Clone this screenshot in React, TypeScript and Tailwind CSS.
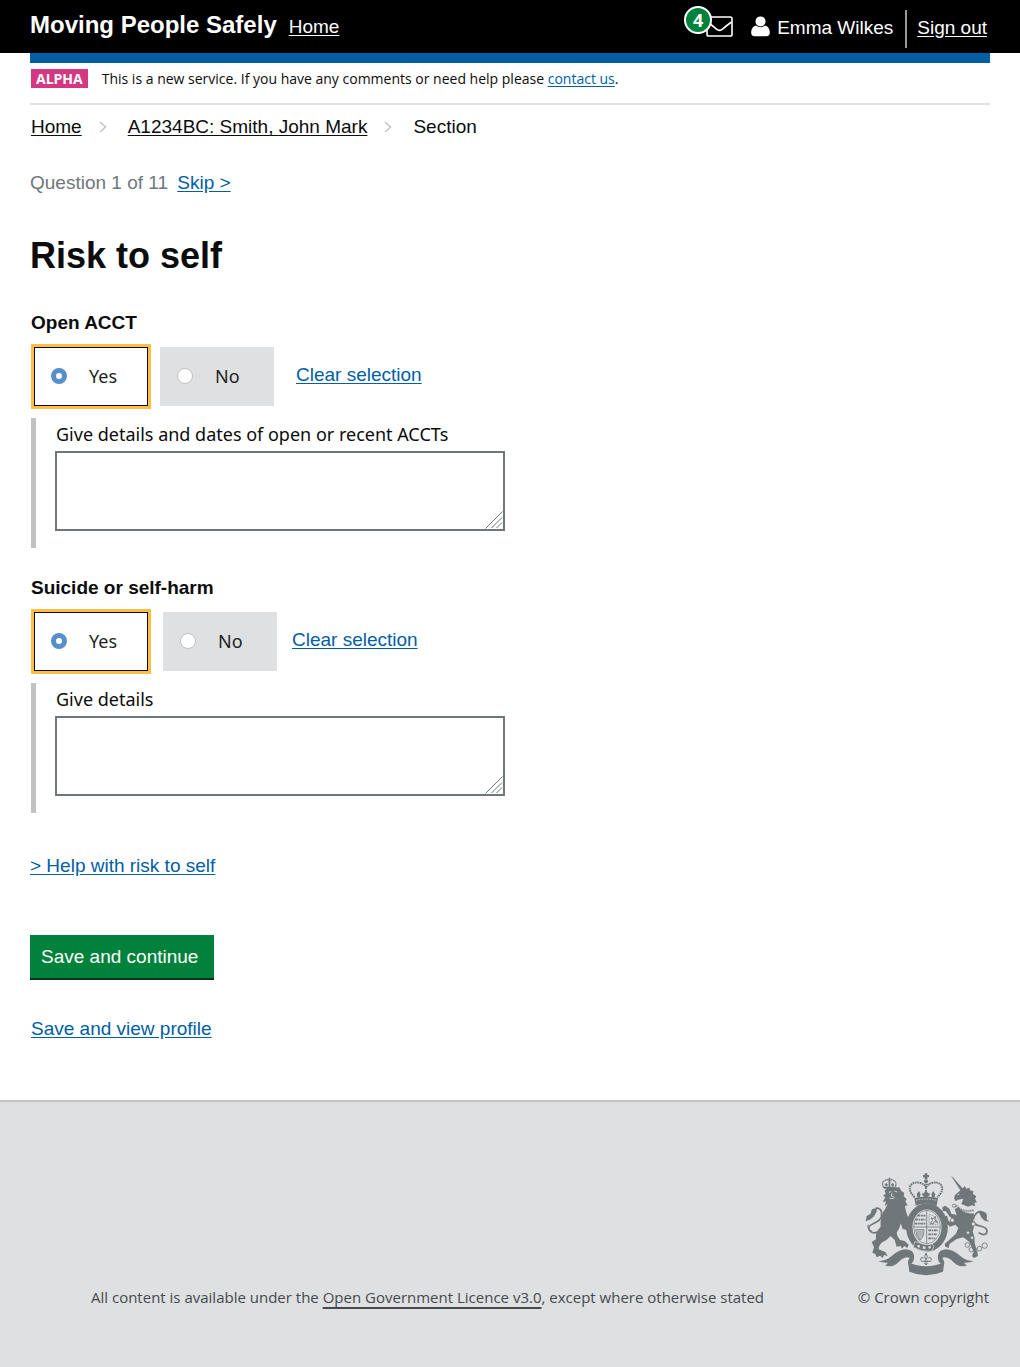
import { useState } from "react";

const linkBlue = "text-[#005ea5] underline underline-offset-2";

function MailIcon() {
  return (
    <svg width="27" height="21" viewBox="0 0 27 21" fill="none" stroke="#fff" strokeWidth="1.6" aria-hidden="true">
      <rect x="1" y="1" width="25" height="19" rx="1.8" />
      <path d="M1.5 6 C5 8.500 8 11 10.500 13.200 Q13.500 15.600 16.500 13.200 C19 11 22 8.500 25.500 6" />
    </svg>
  );
}

function PersonIcon() {
  return (
    <svg width="19" height="21" viewBox="0 0 19 21" aria-hidden="true">
      <path
        d="M5 9.600 C1.500 10.500 0.200 13.500 0.200 16.800 Q0.200 20.200 3.500 20.200 H15.500 Q18.800 20.200 18.800 16.800 C18.800 13.500 17.500 10.500 14 9.600 Q9.500 13 5 9.600Z"
        fill="#fff"
      />
      <circle cx="9.500" cy="5.400" r="5" fill="#fff" />
    </svg>
  );
}

function Chevron() {
  return (
    <svg width="8" height="12" viewBox="0 0 8 12" fill="none" stroke="#bfc1c3" strokeWidth="1.400" aria-hidden="true">
      <path d="M1 1 L6.500 6 L1 11" />
    </svg>
  );
}

function Crest() {
  return (
    <svg width="124" height="104" viewBox="45 36 372 312" role="img" aria-label="Royal coat of arms">
      <g fill="#6f777b" stroke="none">
        {/* lion */}
        <path d="M104 92 L112 84 L148 82 L154 93 L163 99 L161 109 L170 117 L166 124 L173 136 L165 138 L167 150 Q171 168 178 178 L186 192 L184 200 L188 212 L178 209 L173 216 L168 209 L158 207 L152 190 Q150 206 140 218 Q140 228 150 240 L164 243 L176 254 L172 264 L163 258 L156 266 L152 258 L140 260 L134 240 L122 228 Q112 240 98 246 Q86 254 86 268 L106 276 L113 288 L102 285 L98 294 L90 287 L80 292 L76 282 L67 278 L72 262 L65 246 L78 238 Q74 218 92 200 Q90 184 95 170 Q98 154 106 146 L113 132 L104 138 L108 124 L98 126 L106 112 L99 107 L107 101Z" />
        <path d="M82 143 L66 148 L61 162 L50 168 L47 184 L62 178 L72 169 L79 157Z" />
        <path d="M102 84 Q92 68 104 62 Q112 56 118 62 Q124 56 132 62 Q142 68 135 84" fill="none" stroke="#6f777b" strokeWidth="4" strokeDasharray="5 1.500" />
        <path d="M102 80 H135 V86 H102Z M116 53h5v28h-5z M109 68l5 6-5 6-5-6z M128 68l5 6-5 6-5-6z" />
        {/* unicorn */}
        <path d="M303 47 L310 53 L342 90 L333 94Z" />
        <path d="M312 115 L315 105 L328 94 L336 88 L344 78 L349 86 L358 83 L360 91 L370 94 L369 102 L379 109 L375 116 L381 127 L373 128 L376 139 L366 136 L354 140 L334 132 L340 116 L324 119 L317 124Z" />
        <path d="M314 147 L326 142 Q344 164 372 160 L370 186 Q374 204 368 214 Q376 232 374 250 L382 276 L384 288 L372 294 L366 288 L371 276 L358 246 L340 232 L320 237 L299 251 L296 264 L286 260 L284 252 L294 243 L318 221 L325 204 L316 194 L300 200 L288 188 L283 170 L291 167 L296 184 L307 185 L310 176 L299 170 L288 154 L278 153 L277 142 L286 137 L298 146 L304 161 L320 165Z" />
        <path d="M386 155 Q405 150 411 165 L410 178 L417 185 L404 182 L395 174Z" />
      </g>
      <g fill="none" stroke="#6f777b">
        {/* tails */}
        <path d="M82 216 C66 224 54 210 57 200 C64 188 88 190 94 170 C98 152 91 143 77 144" strokeWidth="5" />
        <path d="M66 214 C58 212 52 204 54 194" strokeWidth="3" />
        <path d="M370 178 C374 158 388 152 396 156 M372 184 C372 204 408 192 411 212 C411 226 398 227 386 218" strokeWidth="5" />
        {/* collar and chain */}
        <path d="M318 137 Q340 160 372 150" strokeWidth="7" strokeDasharray="3 3" />
        <g strokeWidth="2.500">
          <circle cx="312" cy="137" r="5" />
          <circle cx="307" cy="181" r="6" fill="#dee0e2" />
          <circle cx="370" cy="192" r="6" fill="#dee0e2" />
          <circle cx="354" cy="218" r="5" fill="#dee0e2" />
          <circle cx="366" cy="233" r="5" fill="#dee0e2" />
          <circle cx="352" cy="255" r="7" />
          <circle cx="364" cy="269" r="7" />
          <circle cx="388" cy="266" r="7" />
          <circle cx="404" cy="257" r="8" />
          <path d="M370 264 Q377 273 382 266" />
        </g>
        {/* garter */}
        <ellipse cx="231" cy="202" rx="53" ry="63" strokeWidth="19" />
        <ellipse cx="231" cy="201" rx="40" ry="50" strokeWidth="2" />
        <path d="M230 152 V250 M191 201 H271" strokeWidth="2.500" />
        <g strokeWidth="5.500" strokeDasharray="8 2 5 2">
          <path d="M203 167 H226 M196 179 H226 M194 191 H226 M235 211 H264 M235 223 H262 M235 235 H256" />
        </g>
        <path d="M197 209 H222 Q222 232 210 240 Q199 228 197 209 M204 211 V230 M210 211 V238 M216 211 V230" strokeWidth="2.500" />
        <path d="M237 164 Q260 166 264 194 H237Z" strokeWidth="2" strokeDasharray="3 2" />
        <path d="M241 190 L248 181 L243 174 L251 176 L256 169 L255 180 L263 187 L253 185 L249 192Z" strokeWidth="3" />
        {/* crown */}
        <path d="M194 112 C164 82 186 63 208 68 Q226 73 228 84 Q230 73 248 68 C270 63 292 82 262 112" strokeWidth="6" strokeDasharray="5 2" />
        <path d="M228 66 V112" strokeWidth="5" strokeDasharray="4 2" />
      </g>
      <g fill="#6f777b">
        <path d="M224 40h8v5h5v7h-5v5h-8v-5h-5v-7h5z" />
        <circle cx="228" cy="64" r="6" />
        <path d="M193 114 Q228 105 264 114 L260 137 Q228 124 197 137Z" />
        <path d="M228 90 L233 98 L241 102 L233 112 H223 L215 102 L223 98Z M207 93 L212 103 L209 113 H203 L200 103Z M249 93 L256 103 L253 113 H247 L244 103Z" />
        <path d="M198 121 Q228 113 259 121" fill="none" stroke="#dee0e2" strokeWidth="2" strokeDasharray="5 3" />
        {/* buckle */}
        <path d="M194 245 L206 248 Q228 258 246 252 L252 260 L244 274 Q216 276 190 262Z" stroke="#dee0e2" strokeWidth="2" />
        <path d="M204 254l7 3-3 6-7-3z M219 259l8 1-1 7-8-1z M235 259l7-1 1 6-7 2z" fill="#dee0e2" />
        {/* ribbon */}
        <path d="M84 303 Q104 304 122 290 Q148 268 168 268 Q190 270 192 286 Q194 300 186 310 L174 313 Q173 300 179 293 Q166 288 152 300 Q138 316 124 319 L106 318 Q110 312 114 308 Q98 309 84 303Z" />
        <path d="M372 303 Q352 304 334 290 Q308 268 288 268 Q266 270 264 286 Q262 300 270 310 L282 313 Q283 300 277 293 Q290 288 304 300 Q318 316 332 319 L350 318 Q346 312 342 308 Q358 309 372 303Z" />
        <path d="M174 306 Q228 332 283 306 L279 335 Q228 356 178 335Z" />
      </g>
      <g fill="none" stroke="#6f777b" strokeWidth="3">
        <path d="M228 279 Q220 290 228 301 Q236 290 228 279Z M226 303 Q212 308 212 297 Q214 289 221 294 M230 303 Q244 308 244 297 Q242 289 235 294 M220 304 H236 M228 304 V315 L223 309 M228 315 L233 309" />
      </g>
      {/* lion face */}
      <g fill="none" stroke="#dee0e2" strokeWidth="2.500">
        <path d="M116 97 L124 95 M133 93 L142 96 M126 99 L124 108 L131 110 M118 114 Q125 119 134 113 M322 104 L328 102" />
      </g>
    </svg>
  );
}

function ResizeGrip() {
  return (
    <svg
      className="pointer-events-none absolute right-0.5 bottom-0.5"
      width="18"
      height="18"
      viewBox="0 0 18 18"
      stroke="#6f777b"
      strokeWidth="1"
      aria-hidden="true"
    >
      <path d="M0.500 17.500 L17.500 0.500 M6.500 17 L17 6.500 M11.500 17 L17 11.500" />
    </svg>
  );
}

type RiskQuestionProps = {
  id: string;
  legend: string;
  detailLabel: string;
  optionGap: string;
  linkGap: string;
};

function RiskQuestion({ id, legend, detailLabel, optionGap, linkGap }: RiskQuestionProps) {
  const [answer, setAnswer] = useState<string | null>("Yes");
  return (
    <fieldset className="pl-px">
      <legend className="text-[19px] leading-6 font-bold">{legend}</legend>
      <div className="mt-3 flex items-center pl-[3px]">
        <div className={`flex ${optionGap}`}>
          {["Yes", "No"].map((option) => (
            <label
              key={option}
              className="flex h-[59px] w-[114px] cursor-pointer items-center gap-[22px] border border-[#dee0e2] bg-[#dee0e2] pb-0.5 pl-4 font-[Noto_Sans,sans-serif] text-lg text-[#231f20] has-checked:border-[#0b0c0c] has-checked:bg-white has-checked:shadow-[0_0_0_3px_#ffbf47]"
            >
              <input
                type="radio"
                name={id}
                value={option}
                checked={answer === option}
                onChange={() => setAnswer(option)}
                className="size-4 appearance-none rounded-full border border-[#bfc1c3] bg-white outline-none checked:border-[5px] checked:border-[#568fcb]"
              />
              {option}
            </label>
          ))}
        </div>
        <a
          href="#clear"
          onClick={(event) => {
            event.preventDefault();
            setAnswer(null);
          }}
          className={`pb-1 text-[19px] leading-6 ${linkBlue} ${linkGap}`}
        >
          Clear selection
        </a>
      </div>
      <div className="mt-3 border-l-[5px] border-[#bfc1c3] pt-1 pb-[17px] pl-[19px]">
        <label htmlFor={`${id}-details`} className="block pl-px font-[Noto_Sans,sans-serif] text-lg leading-6">
          {detailLabel}
        </label>
        <div className="relative mt-[5px] h-20 max-w-[450px]">
          <textarea
            id={`${id}-details`}
            className="block size-full resize-none border-2 border-[#6f777b] bg-white p-2 text-[19px] outline-none"
          />
          <ResizeGrip />
        </div>
      </div>
    </fieldset>
  );
}

export default function App() {
  return (
    <div className="flex min-h-screen flex-col bg-white font-[Liberation_Sans,Arial,sans-serif] text-[19px] leading-6 text-[#0b0c0c]">
      <header className="flex h-[53px] items-center justify-between bg-black pr-[33px] pl-[30px] text-white">
        <div className="flex items-baseline gap-3 pb-1">
          <span className="text-2xl font-bold">Moving People Safely</span>
          <a href="#home" className="underline underline-offset-2">Home</a>
        </div>
        <div className="flex items-center">
          <a href="#messages" aria-label="4 messages" className="relative">
            <MailIcon />
            <span className="absolute -top-2.5 -left-[22px] flex size-7 items-center justify-center rounded-full border-2 border-white bg-[#00823b] font-[Noto_Sans,sans-serif] text-lg leading-6 font-bold">
              4
            </span>
          </a>
          <span className="ml-[18px] flex items-center gap-[7px]">
            <PersonIcon />
            <span className="pt-0.5">Emma Wilkes</span>
          </span>
          <span className="mt-1 ml-3 h-[38px] w-0.5 bg-[#999]" />
          <a href="#sign-out" className="ml-2.5 pt-0.5 underline underline-offset-2">Sign out</a>
        </div>
      </header>

      <div className="px-[30px]">
        <div className="h-2.5 bg-[#005ea5]" />
        <div className="flex items-center gap-3.5 border-b-2 border-[#dee0e2] pt-[5px] pb-3.5 pl-px font-[Open_Sans,sans-serif] text-sm leading-[21px]">
          <strong className="bg-[#d53880] px-[5px] leading-[19px] font-bold text-white">ALPHA</strong>
          <p>
            This is a new service. If you have any comments or need help please{" "}
            <a href="#contact" className={linkBlue}>contact us</a>.
          </p>
        </div>
        <nav aria-label="Breadcrumb" className="pt-2.5 pl-px">
          <ol className="flex items-center">
            <li><a href="#home" className="underline underline-offset-2">Home</a></li>
            <li className="mr-[21px] ml-[17px]"><Chevron /></li>
            <li><a href="#person" className="underline underline-offset-2">A1234BC: Smith, John Mark</a></li>
            <li className="mr-[21px] ml-[17px]"><Chevron /></li>
            <li aria-current="page">Section</li>
          </ol>
        </nav>
      </div>

      <main className="px-[30px] pt-8 pb-[59px]">
        <p className="text-[#6f777b]">
          Question 1 of 11 <a href="#skip" className={`ml-1 ${linkBlue}`}>Skip &gt;</a>
        </p>
        <h1 className="mt-[41px] text-4xl leading-10 font-bold">Risk to self</h1>
        <form className="mt-[35px]" onSubmit={(event) => event.preventDefault()}>
          <div className="flex flex-col gap-7">
            <RiskQuestion
              id="acct"
              legend="Open ACCT"
              detailLabel="Give details and dates of open or recent ACCTs"
              optionGap="gap-3"
              linkGap="ml-[22px]"
            />
            <RiskQuestion
              id="self-harm"
              legend="Suicide or self-harm"
              detailLabel="Give details"
              optionGap="gap-[15px]"
              linkGap="ml-[15px]"
            />
          </div>
          <p className="mt-[41px]">
            <a href="#help" className={linkBlue}>&gt; Help with risk to self</a>
          </p>
          <button type="submit" className="mt-[57px] block border-b-2 border-[#003618] bg-[#00823b] py-2.5 pr-4 pl-[11px] leading-[23px] text-white">
            Save and continue
          </button>
          <p className="mt-[37px] pl-px">
            <a href="#profile" className={linkBlue}>Save and view profile</a>
          </p>
        </form>
      </main>

      <footer className="flex grow items-end justify-between border-t-2 border-[#bfc1c3] bg-[#dee0e2] pt-[70px] pr-[31px] pb-[58px] pl-[91px] font-[Open_Sans,sans-serif] text-[15px] leading-6 text-[#454a4c]">
        <p>
          All content is available under the{" "}
          <a href="#licence" className="underline decoration-2 underline-offset-4">Open Government Licence v3.0</a>, except where otherwise stated
        </p>
        <div className="flex flex-col items-end gap-[9px]">
          <Crest />
          <p>© Crown copyright</p>
        </div>
      </footer>
    </div>
  );
}
